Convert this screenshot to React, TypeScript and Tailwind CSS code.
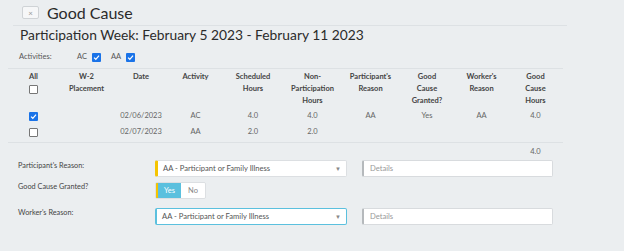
import React from "react";

const cols = "grid grid-cols-[51px_55px_54px_55px_60px_59px_57px_56px_53px_55px]";

function Box({ checked }: { checked?: boolean }) {
  if (checked) {
    return (
      <span className="inline-flex w-[9px] h-[9px] rounded-[1px] bg-[#1a73e8] items-center justify-center">
        <svg viewBox="0 0 10 10" className="w-[7px] h-[7px]">
          <path d="M1.5 5.2 L4 7.6 L8.6 2.4" fill="none" stroke="white" strokeWidth="1.8" />
        </svg>
      </span>
    );
  }
  return <span className="inline-block w-[9px] h-[9px] rounded-[1px] bg-white border border-[#767676]" />;
}

const headers = [
  ["W-2", "Placement"],
  ["Date"],
  ["Activity"],
  ["Scheduled", "Hours"],
  ["Non-", "Participation", "Hours"],
  ["Participant's", "Reason"],
  ["Good", "Cause", "Granted?"],
  ["Worker's", "Reason"],
  ["Good", "Cause", "Hours"],
];

const rows = [
  { checked: true, cells: ["", "02/06/2023", "AC", "4.0", "4.0", "AA", "Yes", "AA", "4.0"] },
  { checked: false, cells: ["", "02/07/2023", "AA", "2.0", "2.0", "", "", "", ""] },
];

function Select({ focus }: { focus?: boolean }) {
  return (
    <div
      className={`w-[192px] h-[17px] bg-white flex items-center justify-between pl-[5px] pr-[5px] rounded-[2px] ${
        focus
          ? "border border-[#5bc0de] border-l-[2px]"
          : "border border-[#dcdfe2] border-l-[3px] border-l-[#f5c400]"
      }`}
    >
      <span className="text-[7.6px] text-[#555]">AA - Participant or Family Illness</span>
      <span className="text-[6px] text-[#888]">▼</span>
    </div>
  );
}

function Details() {
  return (
    <div className="w-[191px] h-[17px] bg-white border border-[#d8dbde] border-l-[2px] border-l-[#b5b9bc] rounded-[2px] flex items-center pl-[6px]">
      <span className="text-[7.6px] text-[#999]">Details</span>
    </div>
  );
}

export default function App() {
  return (
    <div className="w-[624px] h-[251px] bg-[#ebeef0] pl-[8px] font-['Lato',sans-serif] text-[#555] overflow-hidden">
      <div className="ml-[5px] w-[554px] h-[26px] border-b border-[#dde1e4] flex items-center">
        <div className="ml-[9px] w-[17px] h-[13px] bg-[#f6f7f8] border border-[#cfd3d6] rounded-[2px] flex items-center justify-center text-[8px] leading-none text-[#999]">
          ×
        </div>
        <h1 className="ml-[8px] text-[16px] leading-[24px] text-[#2b2b2b]">Good Cause</h1>
      </div>

      <div className="w-[555px] border-b border-[#dde1e4]">
        <div className="pl-[12px] text-[13.8px] leading-[18px] text-[#2b2b2b]">
          Participation Week: February 5 2023 - February 11 2023
        </div>
        <div className="h-[24px] pt-[2px] pl-[11px] flex items-center text-[7.5px] text-[#555]">
          <span className="w-[58px]">Activities:</span>
          <span className="mr-[5px]">AC</span>
          <Box checked />
          <span className="ml-[10px] mr-[5px]">AA</span>
          <Box checked />
        </div>
      </div>

      <div className="w-[555px] border-b border-[#dde1e4] pt-[2px] pb-[2px]">
        <div className={`${cols} text-[7.5px] leading-[12px] font-bold text-[#444] text-center`}>
          <div className="flex flex-col items-center">
            <span>All</span>
            <span className="h-[12px] flex items-center">
              <Box />
            </span>
          </div>
          {headers.map((h, i) => (
            <div key={i} className="flex flex-col items-center">
              {h.map((l) => (
                <span key={l}>{l}</span>
              ))}
            </div>
          ))}
        </div>
        <div className="mt-[1px]">
          {rows.map((r, i) => (
            <div key={i} className={`${cols} h-[16px] items-center text-[7.5px] text-[#666] text-center`}>
              <div className="flex justify-center">
                <Box checked={r.checked} />
              </div>
              {r.cells.map((c, j) => (
                <div key={j}>{c}</div>
              ))}
            </div>
          ))}
        </div>
      </div>

      <div className={`${cols} w-[555px] mt-[3px] text-[7.5px] leading-[12px] text-[#666] text-center`}>
        <div className="col-start-10">4.0</div>
      </div>

      <div className="mt-[2px] pl-[10px] flex flex-col">
        <div className="flex items-start">
          <span className="w-[137px] text-[7.3px] leading-[12px] text-[#444]">Participant's Reason:</span>
          <Select />
          <div className="ml-[15px]">
            <Details />
          </div>
        </div>
        <div className="flex items-start mt-[5px]">
          <span className="w-[137px] text-[7.3px] leading-[10px] text-[#444]">Good Cause Granted?</span>
          <div className="flex h-[17px] rounded-[2px] overflow-hidden border border-[#dcdfe2]">
            <span className="w-[25px] bg-[#5bc0de] border-l-[2px] border-[#f5c400] text-white text-[7.5px] flex items-center justify-center">
              Yes
            </span>
            <span className="w-[24px] bg-white text-[#888] text-[7.5px] flex items-center justify-center">No</span>
          </div>
        </div>
        <div className="flex items-start mt-[9px]">
          <span className="w-[137px] text-[7.3px] leading-[9px] text-[#444]">Worker's Reason:</span>
          <Select focus />
          <div className="ml-[15px]">
            <Details />
          </div>
        </div>
      </div>
    </div>
  );
}
